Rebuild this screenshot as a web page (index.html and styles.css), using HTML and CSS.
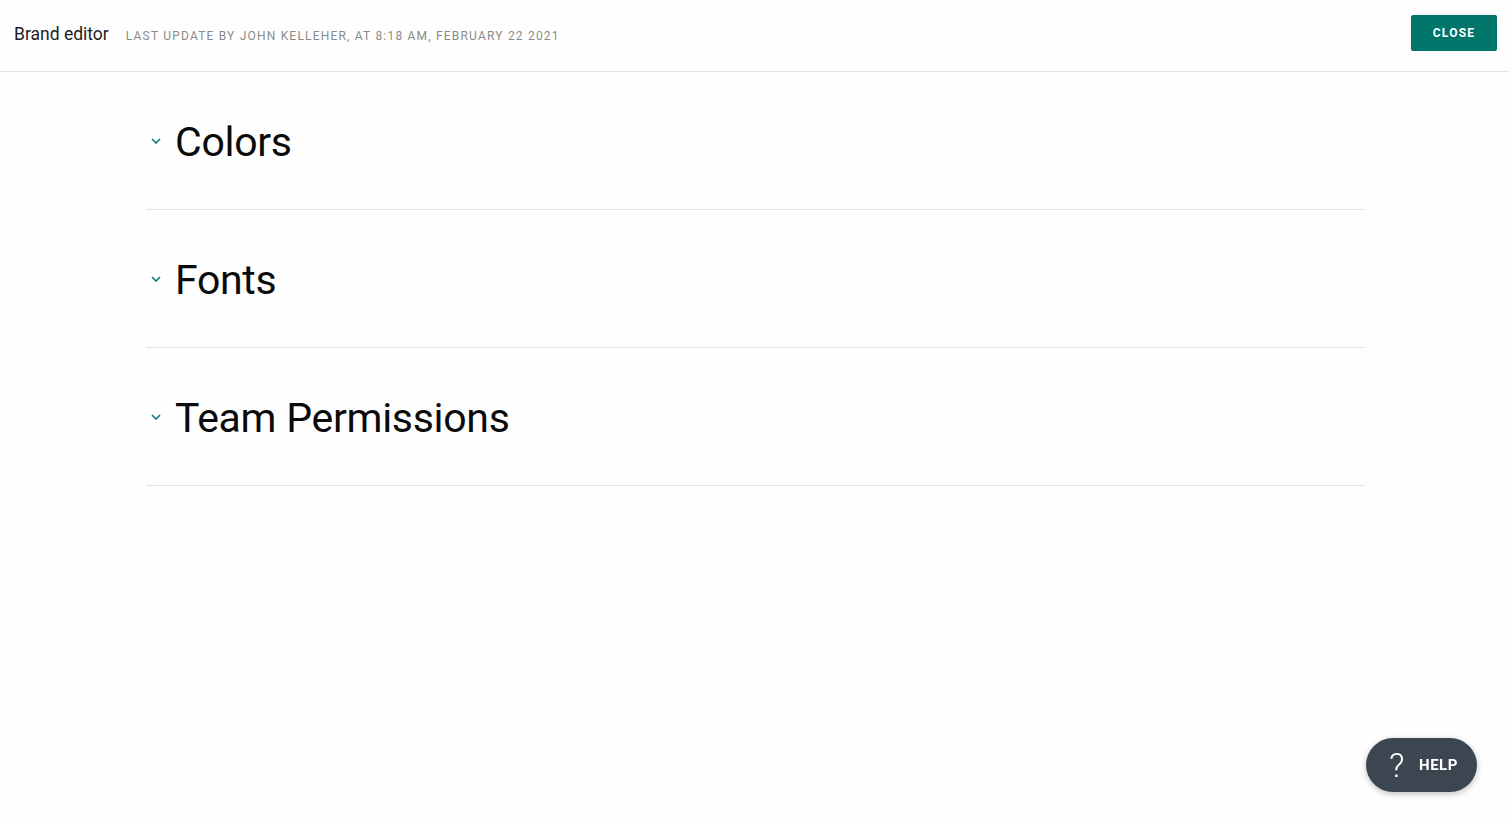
FILE: index.html
```html
<!DOCTYPE html>
<html lang="en">
  <head>
    <meta charset="UTF-8" />
    <meta name="viewport" content="width=device-width, initial-scale=1.0" />
    <title>Brand editor</title>
    <link rel="stylesheet" href="styles.css">
  </head>
  <body>
    <!-- Top bar -->
    <header class="topbar">
      <div class="topbar-title">
        <h1>Brand editor</h1>
        <span class="last-update">Last update by John Kelleher, at 8:18 AM, February 22 2021</span>
      </div>
      <button class="btn-close">Close</button>
    </header>

    <!-- Collapsible sections -->
    <main class="sections">
      <section class="section">
        <button class="section-toggle">
          <svg class="chevron" width="10" height="6" viewBox="0 0 10 6"><path d="M1 1l4 4 4-4" fill="none" stroke="currentColor" stroke-width="1.6"/></svg>
          <h2>Colors</h2>
        </button>
      </section>
      <section class="section">
        <button class="section-toggle">
          <svg class="chevron" width="10" height="6" viewBox="0 0 10 6"><path d="M1 1l4 4 4-4" fill="none" stroke="currentColor" stroke-width="1.6"/></svg>
          <h2>Fonts</h2>
        </button>
      </section>
      <section class="section">
        <button class="section-toggle">
          <svg class="chevron" width="10" height="6" viewBox="0 0 10 6"><path d="M1 1l4 4 4-4" fill="none" stroke="currentColor" stroke-width="1.6"/></svg>
          <h2>Team Permissions</h2>
        </button>
      </section>
    </main>

    <button class="help-btn">
      <span class="help-icon">?</span>
      <span>Help</span>
    </button>
  </body>
</html>
```

FILE: styles.css
```css
body {
  font-family: Roboto, "Noto Sans", sans-serif;
  margin: 0;
  padding: 0;
  background: #fefefe;
  color: #111;
}
button {
  font-family: inherit;
}
.topbar {
  height: 72px;
  box-sizing: border-box;
  border-bottom: 1px solid #dfe5e4;
  display: flex;
  align-items: flex-start;
  justify-content: space-between;
  padding: 15px 12px 0 14px;
}
.topbar-title {
  display: flex;
  align-items: baseline;
  gap: 17px;
  padding-top: 9px;
}
.topbar-title h1 {
  margin: 0;
  font-size: 17.5px;
  font-weight: 400;
  color: #1c1d1f;
}
.last-update {
  font-size: 12px;
  letter-spacing: 1.2px;
  text-transform: uppercase;
  color: #8b8b8b;
}
.btn-close {
  width: 86px;
  height: 36px;
  background: #00766b;
  color: #fff;
  border: none;
  border-radius: 2px;
  font-size: 12px;
  font-weight: 700;
  letter-spacing: 1.2px;
  text-transform: uppercase;
  cursor: pointer;
}
.sections {
  margin: 0 144px 0 146px;
}
.section {
  height: 138px;
  box-sizing: border-box;
  border-bottom: 1px solid #e2e2e2;
  display: flex;
  align-items: center;
  padding-top: 2px;
}
.section-toggle {
  display: flex;
  align-items: center;
  gap: 14px;
  background: none;
  border: none;
  padding: 0 0 0 5px;
  cursor: pointer;
  color: #0a7a73;
}
.chevron {
  margin-top: -1px;
}
.section-toggle h2 {
  margin: 0;
  font-size: 41px;
  font-weight: 400;
  letter-spacing: -0.3px;
  color: #0b0b0b;
}
.help-btn {
  position: fixed;
  right: 32px;
  bottom: 31px;
  width: 111px;
  height: 54px;
  border-radius: 27px;
  border: none;
  background: #3c4650;
  color: #fff;
  display: flex;
  align-items: center;
  justify-content: center;
  gap: 14px;
  padding: 0 0 0 4px;
  font-size: 15px;
  font-weight: 700;
  letter-spacing: 0.5px;
  text-transform: uppercase;
  box-shadow: 0 2px 6px rgba(0, 0, 0, 0.25);
  cursor: pointer;
}
.help-icon {
  font-size: 34px;
  font-weight: 300;
  line-height: 1;
}
```
